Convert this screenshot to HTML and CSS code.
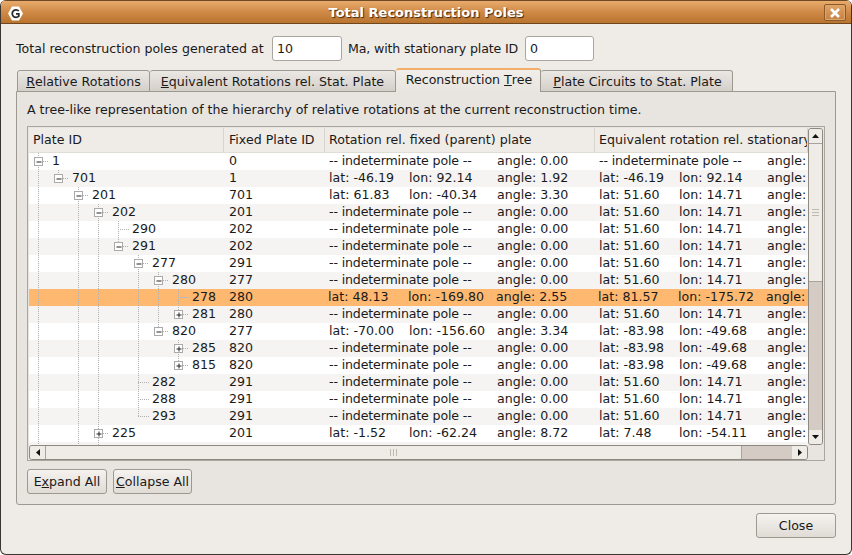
FILE: index.html

```html
<!DOCTYPE html>
<html lang="en">
    <head>
        <meta charset="UTF-8">
        <title>Total Reconstruction Poles</title>
        <link rel="stylesheet" href="styles.css">
    </head>
    <body>
        <div class="window">
            <div class="titlebar">
                <svg class="app-icon" width="15" height="15" viewBox="0 0 15 15">
                    <polygon points="4,0.5 11,0.5 15,7.5 11,14.5 4,14.5 0,7.5" fill="#fff"/>
                    <path d="M10.8 5 A3.8 3.8 0 1 0 10.8 10.2 L10.8 7.8 H8" fill="none" stroke="#2c2c2c" stroke-width="1.8"/>
                </svg>
                <span class="title">Total Reconstruction Poles</span>
                <div class="close-x">
                    <svg width="10" height="10" viewBox="0 0 10 10">
                        <path d="M1 1 L9 9 M9 1 L1 9" stroke="#fff" stroke-width="2.6"/>
                    </svg>
                </div>
            </div>
            <div class="content">
                <div class="top-row">
                    <label class="label-ma">Total reconstruction poles generated at</label>
                    <input class="field field-ma" type="text" value="10">
                    <label class="label-plate">Ma, with stationary plate ID</label>
                    <input class="field field-plate" type="text" value="0">
                </div>
                <div class="tabs">
                    <div class="tab tab-1"><u>R</u>elative Rotations</div>
                    <div class="tab tab-2"><u>E</u>quivalent Rotations rel. Stat. Plate</div>
                    <div class="tab tab-3 active">Reconstruction <u>T</u>ree</div>
                    <div class="tab tab-4"><u>P</u>late Circuits to Stat. Plate</div>
                </div>
                <div class="pane">
                    <p class="desc">A tree-like representation of the hierarchy of relative rotations at the current reconstruction time.</p>
                    <div class="tree-frame">
                        <div class="tree-main">
                            <div class="tree-view">
                                <div class="header">
                                    <div class="hcell h-plate">Plate ID</div>
                                    <div class="hcell h-fixed">Fixed Plate ID</div>
                                    <div class="hcell h-rot">Rotation rel. fixed (parent) plate</div>
                                    <div class="hcell h-equiv">Equivalent rotation rel. stationary plate</div>
                                </div>
                                <div class="rows">
                                    <svg class="tree-lines" width="195" height="293" viewBox="29 153 195 293">
                                        <defs>
                                            <g id="minus"><rect x="-4" y="-4" width="8" height="8" fill="#fff" stroke="#aaa"/><path d="M-2 0.5 H3" stroke="#222"/></g>
                                            <g id="plus"><rect x="-4" y="-4" width="8" height="8" fill="#fff" stroke="#aaa"/><path d="M-2 0.5 H3 M0.5 -2 V3" stroke="#222"/></g>
                                        </defs>
                                        <g class="dots">
                                            <path d="M38.5 153 V446"/>
                                            <path d="M58.5 170 V177"/>
                                            <path d="M78.5 187 V446"/>
                                            <path d="M98.5 204 V446"/>
                                            <path d="M118.5 221 V245"/>
                                            <path d="M138.5 255 V416"/>
                                            <path d="M158.5 272 V330"/>
                                            <path d="M178.5 289 V314"/>
                                            <path d="M178.5 340 V365"/>
                                            <path d="M43 161.5 H48 M63 178.5 H68 M83 195.5 H88 M103 212.5 H108 M118 229.5 H129 M123 246.5 H128 M143 263.5 H148 M163 280.5 H168 M178 297.5 H189 M183 314.5 H188 M163 331.5 H168 M183 348.5 H188 M183 365.5 H188 M138 382.5 H149 M138 399.5 H149 M138 416.5 H149 M103 433.5 H108"/>
                                        </g>
                                        <use href="#minus" x="38.5" y="161.5"/>
                                        <use href="#minus" x="58.5" y="178.5"/>
                                        <use href="#minus" x="78.5" y="195.5"/>
                                        <use href="#minus" x="98.5" y="212.5"/>
                                        <use href="#minus" x="118.5" y="246.5"/>
                                        <use href="#minus" x="138.5" y="263.5"/>
                                        <use href="#minus" x="158.5" y="280.5"/>
                                        <use href="#plus" x="178.5" y="314.5"/>
                                        <use href="#minus" x="158.5" y="331.5"/>
                                        <use href="#plus" x="178.5" y="348.5"/>
                                        <use href="#plus" x="178.5" y="365.5"/>
                                        <use href="#plus" x="98.5" y="433.5"/>
                                    </svg>
                                    <div class="row"><span class="id d0">1</span><span>0</span><span class="wide">-- indeterminate pole --</span><span>angle: 0.00</span><span class="wide">-- indeterminate pole --</span><span>angle: 0.00</span></div>
                                    <div class="row"><span class="id d1">701</span><span>1</span><span>lat: -46.19</span><span>lon: 92.14</span><span>angle: 1.92</span><span>lat: -46.19</span><span>lon: 92.14</span><span>angle: 1.92</span></div>
                                    <div class="row"><span class="id d2">201</span><span>701</span><span>lat: 61.83</span><span>lon: -40.34</span><span>angle: 3.30</span><span>lat: 51.60</span><span>lon: 14.71</span><span>angle: 3.30</span></div>
                                    <div class="row"><span class="id d3">202</span><span>201</span><span class="wide">-- indeterminate pole --</span><span>angle: 0.00</span><span>lat: 51.60</span><span>lon: 14.71</span><span>angle: 3.30</span></div>
                                    <div class="row"><span class="id d4">290</span><span>202</span><span class="wide">-- indeterminate pole --</span><span>angle: 0.00</span><span>lat: 51.60</span><span>lon: 14.71</span><span>angle: 3.30</span></div>
                                    <div class="row"><span class="id d4">291</span><span>202</span><span class="wide">-- indeterminate pole --</span><span>angle: 0.00</span><span>lat: 51.60</span><span>lon: 14.71</span><span>angle: 3.30</span></div>
                                    <div class="row"><span class="id d5">277</span><span>291</span><span class="wide">-- indeterminate pole --</span><span>angle: 0.00</span><span>lat: 51.60</span><span>lon: 14.71</span><span>angle: 3.30</span></div>
                                    <div class="row"><span class="id d6">280</span><span>277</span><span class="wide">-- indeterminate pole --</span><span>angle: 0.00</span><span>lat: 51.60</span><span>lon: 14.71</span><span>angle: 3.30</span></div>
                                    <div class="row selected"><span class="id d7">278</span><span>280</span><span class="nudge">lat: 48.13</span><span class="nudge">lon: -169.80</span><span class="nudge">angle: 2.55</span><span class="nudge">lat: 81.57</span><span class="nudge">lon: -175.72</span><span class="nudge">angle: 5.85</span></div>
                                    <div class="row"><span class="id d7">281</span><span>280</span><span class="wide">-- indeterminate pole --</span><span>angle: 0.00</span><span>lat: 51.60</span><span>lon: 14.71</span><span>angle: 3.30</span></div>
                                    <div class="row"><span class="id d6">820</span><span>277</span><span>lat: -70.00</span><span>lon: -156.60</span><span>angle: 3.34</span><span>lat: -83.98</span><span>lon: -49.68</span><span>angle: 3.30</span></div>
                                    <div class="row"><span class="id d7">285</span><span>820</span><span class="wide">-- indeterminate pole --</span><span>angle: 0.00</span><span>lat: -83.98</span><span>lon: -49.68</span><span>angle: 3.30</span></div>
                                    <div class="row"><span class="id d7">815</span><span>820</span><span class="wide">-- indeterminate pole --</span><span>angle: 0.00</span><span>lat: -83.98</span><span>lon: -49.68</span><span>angle: 3.30</span></div>
                                    <div class="row"><span class="id d5">282</span><span>291</span><span class="wide">-- indeterminate pole --</span><span>angle: 0.00</span><span>lat: 51.60</span><span>lon: 14.71</span><span>angle: 3.30</span></div>
                                    <div class="row"><span class="id d5">288</span><span>291</span><span class="wide">-- indeterminate pole --</span><span>angle: 0.00</span><span>lat: 51.60</span><span>lon: 14.71</span><span>angle: 3.30</span></div>
                                    <div class="row"><span class="id d5">293</span><span>291</span><span class="wide">-- indeterminate pole --</span><span>angle: 0.00</span><span>lat: 51.60</span><span>lon: 14.71</span><span>angle: 3.30</span></div>
                                    <div class="row"><span class="id d3">225</span><span>201</span><span>lat: -1.52</span><span>lon: -62.24</span><span>angle: 8.72</span><span>lat: 7.48</span><span>lon: -54.11</span><span>angle: 8.72</span></div>
                                    <div class="row cut"><span class="id d3"></span><span></span><span class="wide">-- indeterminate pole --</span><span>angle: 0.00</span><span>lat: 7.48</span><span>lon: -54.11</span><span>angle: 8.72</span></div>
                                </div>
                            </div>
                            <div class="vscroll">
                                <div class="sb-btn"><svg width="7" height="4" viewBox="0 0 7 4"><path d="M3.5 0 L7 4 H0 Z" fill="#111"/></svg></div>
                                <div class="v-thumb"><div class="grip-v"></div></div>
                                <div class="v-trough"></div>
                                <div class="sb-btn"><svg width="7" height="4" viewBox="0 0 7 4"><path d="M0 0 H7 L3.5 4 Z" fill="#111"/></svg></div>
                            </div>
                        </div>
                        <div class="hscroll">
                            <div class="sb-btn h"><svg width="4" height="7" viewBox="0 0 4 7"><path d="M4 0 V7 L0 3.5 Z" fill="#111"/></svg></div>
                            <div class="h-thumb"><div class="grip-h"></div></div>
                            <div class="h-trough"></div>
                            <div class="sb-btn h"><svg width="4" height="7" viewBox="0 0 4 7"><path d="M0 0 L4 3.5 L0 7 Z" fill="#111"/></svg></div>
                        </div>
                    </div>
                    <div class="pane-buttons">
                        <button class="btn btn-expand">E<u>x</u>pand All</button>
                        <button class="btn btn-collapse"><u>C</u>ollapse All</button>
                    </div>
                </div>
                <div class="bottom-row">
                    <button class="btn close">Close</button>
                </div>
            </div>
        </div>
    </body>
</html>
```

FILE: styles.css

```css
* {
    box-sizing: border-box;
}
html, body {
    margin: 0;
    padding: 0;
    background-color: #fff;
}
body {
    font-family: "DejaVu Sans", sans-serif;
    font-size: 12.6px;
    color: #1a1a1a;
    width: 852px;
    height: 555px;
    overflow: hidden;
}
.window {
    width: 852px;
    height: 555px;
    background-color: #efebe7;
    border: 1px solid #3a3530;
    border-top: none;
    border-radius: 6px;
    display: flex;
    flex-direction: column;
    overflow: hidden;
}
.titlebar {
    height: 24px;
    flex-shrink: 0;
    background: linear-gradient(#e8ab6c, #d08a47 50%, #b9742f);
    border-top: 1px solid #6d4a25;
    border-bottom: 1px solid #70461c;
    display: flex;
    align-items: center;
    justify-content: center;
    position: relative;
}
.app-icon {
    position: absolute;
    left: 7px;
    top: 5px;
}
.title {
    font-size: 13px;
    font-weight: bold;
    color: #fff;
    text-shadow: 1px 1px 1px #40280f;
}
.close-x {
    position: absolute;
    right: 5px;
    top: 3px;
    width: 22px;
    height: 17px;
    border: 1px solid #8a5a2a;
    border-radius: 2px;
    background-color: rgba(255, 255, 255, 0.08);
    box-shadow: inset 0 0 0 1px #dba56c;
    display: flex;
    align-items: center;
    justify-content: center;
}
.content {
    flex-grow: 1;
    display: flex;
    flex-direction: column;
    padding: 12px 15px 0 15px;
}
.top-row {
    display: flex;
    align-items: center;
    height: 25px;
}
.label-ma {
    width: 256px;
    white-space: nowrap;
}
.label-plate {
    width: 183px;
    padding-left: 6px;
    white-space: nowrap;
    letter-spacing: -0.15px;
}
.field {
    height: 25px;
    border: 1px solid #aaa69f;
    border-radius: 3px;
    padding: 0 4px;
    font-family: inherit;
    font-size: inherit;
    color: inherit;
    background-color: #fff;
}
.field-ma {
    width: 70px;
}
.field-plate {
    width: 69px;
}
.tabs {
    display: flex;
    align-items: flex-end;
    height: 24px;
    margin-top: 7px;
    padding-left: 1px;
    position: relative;
    z-index: 1;
    margin-bottom: -1px;
}
.tab {
    height: 22px;
    display: flex;
    align-items: center;
    justify-content: center;
    white-space: pre;
    background: linear-gradient(#ebe7e3, #d4cfc9);
    border: 1px solid #9d9890;
    border-left: none;
    border-radius: 3px 3px 0 0;
}
.tab-1 { width: 133px; border-left: 1px solid #9d9890; }
.tab-2 { width: 246px; }
.tab-3 { width: 145px; padding-left: 2px; }
.tab-4 { width: 192px; padding-left: 2px; }
.tab.active {
    height: 24px;
    background: linear-gradient(#f1eeea, #e8e4e0);
    border-top: 2px solid #f3ae6c;
    border-bottom: none;
    padding-bottom: 3px;
}
.pane {
    height: 414px;
    width: 820px;
    background-color: #e8e4e0;
    border: 1px solid #9d9890;
    border-radius: 0 0 3px 3px;
    padding: 10px;
    display: flex;
    flex-direction: column;
}
.desc {
    margin: 0;
    height: 24px;
    line-height: 16px;
    white-space: nowrap;
}
.tree-frame {
    width: 798px;
    height: 335px;
    border: 1px solid #aaa69f;
    padding: 1px;
    background-color: #e8e4e0;
}
.tree-main {
    display: flex;
    height: 317px;
}
.tree-view {
    width: 779px;
    overflow: hidden;
    flex-shrink: 0;
}
.header {
    height: 25px;
    display: grid;
    grid-template-columns: 195px 101px 270px 1fr;
    background-color: #efebe7;
    border-bottom: 1px solid #e0dcd6;
}
.hcell {
    padding: 0 4px;
    line-height: 24px;
    white-space: nowrap;
    overflow: hidden;
    border-right: 1px solid #d8d4ce;
}
.h-fixed {
    padding-left: 5px;
}
.rows {
    height: 292px;
    overflow: hidden;
    position: relative;
    background-color: #fff;
}
.tree-lines {
    position: absolute;
    left: 0;
    top: 0;
}
.dots path {
    fill: none;
    stroke: #b0b0b0;
    stroke-dasharray: 1 1;
    shape-rendering: crispEdges;
}
.row {
    height: 17px;
    line-height: 16px;
    display: grid;
    grid-template-columns: 200px 100px 80px 88px 102px 80px 88px 1fr;
    white-space: nowrap;
    background-color: #fff;
}
.row:nth-of-type(even) {
    background-color: #f5f4f2;
}
.row.selected {
    background-color: #ffb870;
}
.row.cut {
    padding-top: 1px;
}
.wide {
    grid-column: span 2;
    letter-spacing: -0.15px;
}
.nudge {
    margin-left: -1px;
}
.id {
    position: relative;
    z-index: 1;
}
.d0 { padding-left: 23px; }
.d1 { padding-left: 43px; }
.d2 { padding-left: 63px; }
.d3 { padding-left: 83px; }
.d4 { padding-left: 103px; }
.d5 { padding-left: 123px; }
.d6 { padding-left: 143px; }
.d7 { padding-left: 163px; }
.vscroll {
    width: 15px;
    display: flex;
    flex-direction: column;
    border: 1px solid #8d8880;
    border-radius: 3px;
    background-color: #d4ccc4;
    overflow: hidden;
}
.sb-btn {
    width: 13px;
    height: 14px;
    flex-shrink: 0;
    display: flex;
    align-items: center;
    justify-content: center;
    background: #efebe7;
}
.sb-btn.h {
    width: 15px;
    height: 13px;
}
.v-thumb {
    height: 139px;
    background: #efebe7;
    border-top: 1px solid #a8a39b;
    border-bottom: 1px solid #a8a39b;
    display: flex;
    align-items: center;
    justify-content: center;
}
.grip-v {
    width: 7px;
    height: 7px;
    background: repeating-linear-gradient(#bdb8b0 0 1px, transparent 1px 3px);
}
.v-trough {
    flex-grow: 1;
}
.hscroll {
    width: 779px;
    height: 15px;
    display: flex;
    border: 1px solid #8d8880;
    border-radius: 3px;
    background-color: #d4ccc4;
    overflow: hidden;
}
.h-thumb {
    width: 697px;
    background: #efebe7;
    border-left: 1px solid #a8a39b;
    border-right: 1px solid #a8a39b;
    display: flex;
    align-items: center;
    justify-content: center;
}
.grip-h {
    width: 7px;
    height: 7px;
    background: repeating-linear-gradient(90deg, #bdb8b0 0 1px, transparent 1px 3px);
}
.h-trough {
    flex-grow: 1;
}
.pane-buttons {
    display: flex;
    gap: 6px;
    margin-top: 8px;
}
.btn {
    height: 25px;
    padding: 0;
    font-family: inherit;
    font-size: inherit;
    color: inherit;
    white-space: pre;
    background: linear-gradient(#f5f2ef, #e0dbd5);
    border: 1px solid #9d9890;
    border-radius: 3px;
}
.btn-expand { width: 80px; }
.btn-collapse { width: 79px; }
.bottom-row {
    display: flex;
    justify-content: flex-end;
    margin-top: 8px;
}
.btn.close {
    width: 80px;
}
```
